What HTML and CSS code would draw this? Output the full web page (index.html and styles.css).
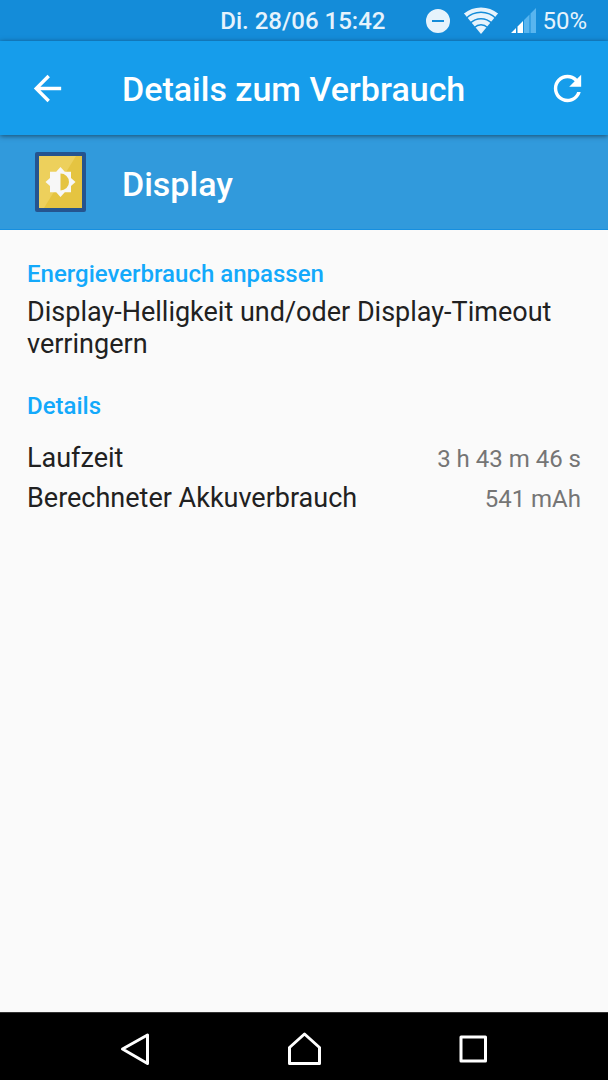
FILE: index.html
```html
<!DOCTYPE html>
<html lang="de">
<head>
<meta charset="utf-8">
<meta name="viewport" content="width=device-width, initial-scale=1">
<title>Details zum Verbrauch</title>
<link rel="stylesheet" href="styles.css">
</head>
<body>
<div class="screen">
  <div class="statusbar">
    <span class="status-date">Di. 28/06 15:42</span>
    <svg class="icon-dnd" viewBox="0 0 24 24" aria-hidden="true"><path fill="currentColor" fill-rule="evenodd" d="M12 0a12 12 0 1 0 0 24a12 12 0 1 0 0-24zM6 11h12v2H6z"/></svg>
    <svg class="icon-wifi" viewBox="0 0 34 27" aria-hidden="true">
      <defs><clipPath id="fan"><path d="M17 27L-2 4V-4H36V4z"/></clipPath></defs>
      <g clip-path="url(#fan)" fill="none" stroke="currentColor">
        <circle cx="17" cy="27" r="24.500" stroke-width="4.200"/>
        <circle cx="17" cy="27" r="18.500" stroke-width="4.800"/>
        <circle cx="17" cy="27" r="12.300" stroke-width="4.600"/>
        <circle cx="17" cy="27" r="4.300" stroke-width="8.600"/>
      </g>
    </svg>
    <svg class="icon-signal" viewBox="0 0 25 25" aria-hidden="true">
      <path fill="#fff" d="M0 25L5 20V25zM6.500 18.500L12 13V25H6.500z"/>
      <path fill="#58b5ef" d="M13 12L18.500 6.500V25H13zM19.500 5.500L25 0V25H19.500z"/>
    </svg>
    <span class="status-battery">50%</span>
  </div>

  <header class="appbar">
    <button class="icon-button" type="button" aria-label="Zurück">
      <svg viewBox="0 0 24 24"><path fill="currentColor" d="M20 11H7.830l5.590-5.590L12 4l-8 8 8 8 1.410-1.410L7.830 13H20v-2z"/></svg>
    </button>
    <h1 class="title">Details zum Verbrauch</h1>
    <button class="icon-button" type="button" aria-label="Aktualisieren">
      <svg viewBox="0 0 24 24"><path fill="currentColor" d="M17.650 6.350C16.200 4.900 14.210 4 12 4c-4.420 0-7.990 3.580-7.990 8s3.570 8 7.990 8c3.730 0 6.840-2.550 7.730-6h-2.080c-.82 2.330-3.040 4-5.650 4-3.310 0-6-2.690-6-6s2.690-6 6-6c1.660 0 3.140.69 4.220 1.780L13 11h7V4l-2.350 2.350z"/></svg>
    </button>
  </header>

  <section class="subject">
    <svg class="subject-icon" viewBox="0 0 51 60" aria-hidden="true">
      <rect width="51" height="60" rx="2" fill="#25548f"/>
      <path fill="#e5c441" d="M4 4H47V56H4z"/>
      <path fill="#edd05c" d="M4 4H41L9 56H4z"/>
      <path fill="#f7f7f7" d="M21.200 19.700L25.500 15l4.300 4.700H36v6.200l4.500 4.100-4.500 4.100v6.200h-6.200L25.500 45l-4.300-4.700H15v-6.200L10.500 30l4.500-4.100v-6.200z"/>
      <path fill="#e5c441" d="M25.500 21.500a8.500 8.500 0 0 1 0 17z"/>
    </svg>
    <h2 class="title">Display</h2>
  </section>

  <main class="content">
    <h3 class="heading">Energieverbrauch anpassen</h3>
    <p class="hint">Display-Helligkeit und/oder Display-Timeout verringern</p>
    <h3 class="heading">Details</h3>
    <dl class="details">
      <div class="row"><dt>Laufzeit</dt><dd>3 h 43 m 46 s</dd></div>
      <div class="row"><dt>Berechneter Akkuverbrauch</dt><dd>541 mAh</dd></div>
    </dl>
  </main>

  <nav class="navbar">
    <button class="nav-button" type="button" aria-label="Zurück"><svg viewBox="0 0 36 36"><path d="M30.500 4V32.500L5.500 18z"/></svg></button>
    <button class="nav-button" type="button" aria-label="Startseite"><svg viewBox="0 0 36 36"><path d="M3.500 16.500L18.500 3L33.500 16.500V32.500H3.500z"/></svg></button>
    <button class="nav-button" type="button" aria-label="Übersicht"><svg viewBox="0 0 36 36"><path d="M6 6H30.500V30H6z"/></svg></button>
  </nav>
</div>
</body>
</html>
```
FILE: styles.css
```css
* {
  box-sizing: border-box;
}

body {
  margin: 0;
  background: #fafafa;
  color: #212121;
  font-family: Roboto, sans-serif;
}

h1, h2, h3, p, dl, dd {
  margin: 0;
}

button {
  padding: 0;
  border: 0;
  background: none;
  color: inherit;
}

svg {
  display: block;
}

.screen {
  display: flex;
  flex-direction: column;
  min-height: 100vh;
}

.statusbar {
  display: flex;
  align-items: center;
  justify-content: flex-end;
  height: 41px;
  padding-right: 21px;
  background: #148cd9;
  color: #e6f3fc;
  font-size: 24px;
}

.status-date {
  margin-right: 41px;
  font-weight: 500;
}

.icon-dnd {
  width: 24px;
  height: 24px;
  margin-right: 14px;
}

.icon-wifi {
  width: 34px;
  height: 27px;
  margin-right: 13px;
}

.icon-signal {
  width: 25px;
  height: 25px;
  margin-right: 6px;
}

.appbar {
  display: flex;
  align-items: center;
  height: 94px;
  padding: 0 20px 0 27px;
  background: #169deb;
  color: #fff;
  box-shadow: 0 1px 5px rgba(0, 0, 0, 0.5);
  z-index: 1;
}

.icon-button svg {
  width: 41px;
  height: 41px;
}

.title {
  flex: 1;
  font-size: 34px;
  font-weight: 500;
  line-height: 40px;
}

.appbar .title {
  padding: 2px 0 0 54px;
}

.subject {
  display: flex;
  align-items: center;
  gap: 36px;
  height: 95px;
  padding: 0 35px;
  border-bottom: 1px solid #168fe0;
  background: #319adc;
  color: #fff;
}

.subject .title {
  padding-top: 3px;
}

.subject-icon {
  width: 51px;
  height: 60px;
}

.content {
  flex: 1;
  padding: 28px 27px;
}

.heading {
  color: #13a9fb;
  font-size: 24px;
  font-weight: 500;
  line-height: 32px;
}

.hint {
  margin: 6px 0 30px;
  font-size: 27px;
  line-height: 32px;
}

.details {
  margin-top: 16px;
}

.row {
  display: flex;
  align-items: baseline;
  justify-content: space-between;
  font-size: 27px;
  line-height: 40px;
}

.row dd {
  color: #757575;
  font-size: 24px;
  line-height: 32px;
}

.navbar {
  display: flex;
  justify-content: center;
  gap: 133px;
  height: 68px;
  padding-top: 5px;
  border-top: 1px solid #333;
  background: #000;
  color: #fff;
}

.nav-button {
  display: flex;
  align-items: center;
}

.nav-button svg {
  width: 36px;
  height: 36px;
  fill: none;
  stroke: currentColor;
  stroke-width: 3;
  stroke-linejoin: round;
}
```
